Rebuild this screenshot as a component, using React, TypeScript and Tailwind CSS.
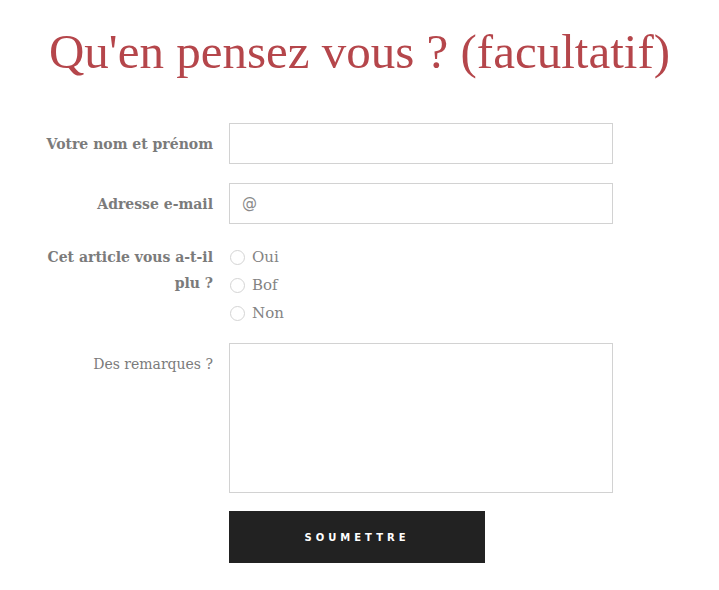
import React from "react";

const labelCls =
  "w-[180px] shrink-0 text-right text-[14px] leading-[26px] font-bold text-[#7b7b7b] [font-family:'DejaVu_Serif',serif]";

function Radio({ label }: { label: string }) {
  return (
    <label className="flex items-center h-[28px] gap-[7px]">
      <span className="ml-[1px] w-[15px] h-[15px] rounded-full border border-[#d4d4d4] bg-white" />
      <span className="text-[15px] text-[#838383] [font-family:'DejaVu_Serif',serif]">{label}</span>
    </label>
  );
}

export default function App() {
  return (
    <div className="w-[719px] h-[590px] bg-white">
      <h1 className="pt-[22px] text-center text-[49px] leading-[60px] text-[#b5464b] [font-family:'Liberation_Serif',serif]">
        Qu'en pensez vous ? (facultatif)
      </h1>
      <form className="pl-[33px] pt-[41px] flex flex-col">
        <div className="flex gap-[16px]">
          <div className={labelCls + " pt-[8px]"}>Votre nom et prénom</div>
          <input className="w-[384px] h-[41px] border border-[#d2d2d2] outline-none" />
        </div>
        <div className="flex gap-[16px] mt-[19px]">
          <div className={labelCls + " pt-[8px]"}>Adresse e-mail</div>
          <div className="w-[384px] h-[41px] border border-[#d2d2d2] flex items-center pl-[12px] text-[15px] text-[#8a8a8a] [font-family:'DejaVu_Sans',sans-serif]">
            @
          </div>
        </div>
        <div className="flex gap-[16px] mt-[19px]">
          <div className={labelCls + " pt-[1px]"}>
            Cet article vous a-t-il
            <br />
            plu ?
          </div>
          <div className="flex flex-col">
            <Radio label="Oui" />
            <Radio label="Bof" />
            <Radio label="Non" />
          </div>
        </div>
        <div className="flex gap-[16px] mt-[16px]">
          <div className={labelCls + " pt-[8px] font-normal"}>Des remarques ?</div>
          <textarea className="w-[384px] h-[150px] border border-[#d2d2d2] outline-none resize-none" />
        </div>
        <div className="flex mt-[18px] pl-[196px]">
          <button
            type="button"
            className="w-[256px] h-[52px] bg-[#222222] text-white text-[10px] font-bold tracking-[4px] [font-family:'DejaVu_Sans',sans-serif]"
          >
            SOUMETTRE
          </button>
        </div>
      </form>
    </div>
  );
}
